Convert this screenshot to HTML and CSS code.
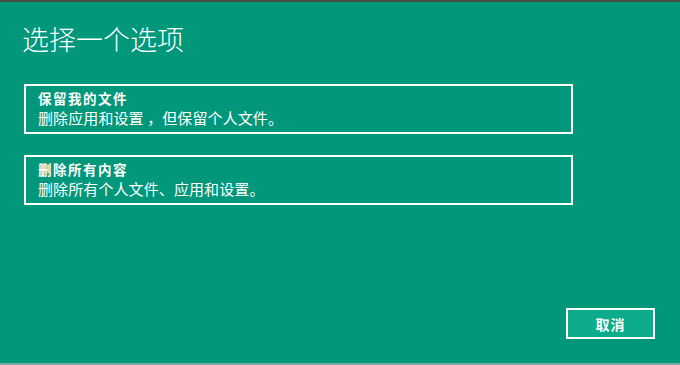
FILE: index.html
```html
<!DOCTYPE html>
<html lang="zh-CN">
<head>
<meta charset="utf-8">
<title>选择一个选项</title>
<link rel="stylesheet" href="styles.css">
</head>
<body>
<div class="screen">
  <div class="topbar"></div>
  <div class="main">
    <h1 class="title">选择一个选项</h1>
    <div class="options">
      <div class="option">
        <div class="option-title">保留我的文件</div>
        <div class="option-desc">删除应用和设置 ，但保留个人文件。</div>
      </div>
      <div class="option">
        <div class="option-title">删除所有内容</div>
        <div class="option-desc">删除所有个人文件、应用和设置。</div>
      </div>
    </div>
    <div class="actions">
      <button class="btn">取消</button>
    </div>
  </div>
  <div class="bottombar"></div>
</div>
</body>
</html>
```
FILE: styles.css
```css
html, body {
  margin: 0;
  padding: 0;
  width: 680px;
  height: 365px;
  overflow: hidden;
}
body {
  background: #00977b;
  color: #ffffff;
  font-family: "Noto Sans CJK SC", "Noto Sans", sans-serif;
}
.screen {
  width: 680px;
  height: 365px;
  display: flex;
  flex-direction: column;
}
.topbar {
  height: 2px;
  background: #4b4b4b;
  flex: none;
}
.main {
  flex: 1;
  display: flex;
  flex-direction: column;
  padding: 0 25px 0 24px;
}
.title {
  margin: 23px 0 0 -2px;
  font-size: 27px;
  line-height: 27px;
  height: 27px;
  font-weight: 300;
}
.options {
  margin-top: 32px;
  display: flex;
  flex-direction: column;
  gap: 21px;
}
.option {
  width: 549px;
  height: 50px;
  box-sizing: border-box;
  border: 2px solid #ffffff;
  padding: 2px 0 0 12px;
}
.option-title {
  font-size: 13.5px;
  font-weight: 700;
  line-height: 20px;
  letter-spacing: 1.5px;
}
.option-desc {
  font-size: 15px;
  line-height: 20px;
  letter-spacing: 0.1px;
}
.actions {
  margin-top: auto;
  margin-bottom: 24px;
  display: flex;
  justify-content: flex-end;
}
.btn {
  width: 89px;
  height: 31px;
  box-sizing: border-box;
  border: 2px solid #ffffff;
  background: #0bab8b;
  color: #ffffff;
  font-family: "Noto Sans CJK SC", sans-serif;
  font-size: 14px;
  font-weight: 700;
  padding: 0;
  letter-spacing: 1px;
}
.bottombar {
  height: 2px;
  background: #7fa89e;
  flex: none;
}
```
